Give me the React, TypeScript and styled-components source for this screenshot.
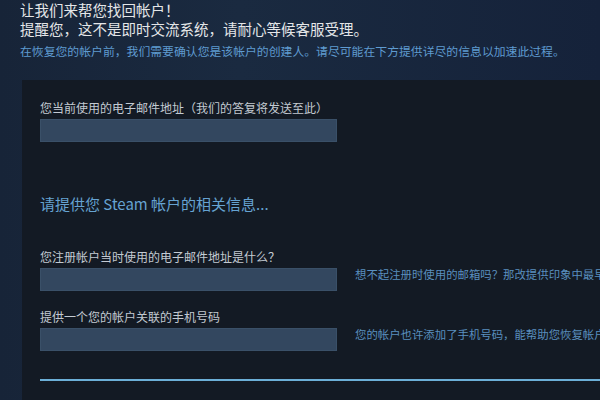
import styled, { createGlobalStyle } from "styled-components";

const GlobalStyle = createGlobalStyle`
  html, body {
    margin: 0;
    padding: 0;
    height: 100%;
    background: #172538;
  }
  body {
    font-family: "Noto Sans CJK SC", "Noto Sans", sans-serif;
    overflow: hidden;
  }
`;

function App() {
  const TITLE1 = "让我们来帮您找回帐户！";
  const TITLE2 = "提醒您，这不是即时交流系统，请耐心等候客服受理。";
  const INTRO =
    "在恢复您的帐户前，我们需要确认您是该帐户的创建人。请尽可能在下方提供详尽的信息以加速此过程。";

  return (
    <Page>
      <GlobalStyle />
      <Header>
        <Title>{TITLE1}</Title>
        <Title>{TITLE2}</Title>
        <Intro>{INTRO}</Intro>
      </Header>
      <Panel>
        <Field>
          <Label>您当前使用的电子邮件地址（我们的答复将发送至此）</Label>
          <Row>
            <Input type="text" />
          </Row>
        </Field>

        <SectionHeading>请提供您 Steam 帐户的相关信息...</SectionHeading>

        <Field>
          <Label>您注册帐户当时使用的电子邮件地址是什么？</Label>
          <Row>
            <Input type="text" />
            <Hint>
              想不起注册时使用的邮箱吗？那改提供印象中最早使用的邮箱地址吧。
            </Hint>
          </Row>
        </Field>

        <Field $gap={18}>
          <Label>提供一个您的帐户关联的手机号码</Label>
          <Row>
            <Input type="text" />
            <Hint>您的帐户也许添加了手机号码，能帮助您恢复帐户。</Hint>
          </Row>
        </Field>

        <Divider />
      </Panel>
    </Page>
  );
}

export default App;

// Style
const Page = styled.div`
  width: 600px;
  height: 400px;
  overflow: hidden;
  background: linear-gradient(90deg, #172438 0%, #1a2a40 40%, #15223a 100%);
`;

const Header = styled.div`
  padding: 0 20px;
  height: 80px;
  box-sizing: border-box;
`;

const Title = styled.div`
  font-size: 14.5px;
  line-height: 19px;
  color: #e4e6e8;
  white-space: nowrap;
`;

const Intro = styled.div`
  margin-top: 5px;
  font-size: 11.85px;
  line-height: 16px;
  color: #5f9bd0;
  white-space: nowrap;
`;

const Panel = styled.div`
  margin-left: 22px;
  padding: 20px 0 40px 18px;
  background: #131a24;
  min-height: 320px;
  box-sizing: border-box;
`;

const Field = styled.div<{ $gap?: number }>`
  display: flex;
  flex-direction: column;
  gap: 3px;
  margin-top: ${(p) => p.$gap ?? 0}px;
`;

const Label = styled.div`
  font-size: 12px;
  line-height: 16px;
  color: #c3cad2;
  white-space: nowrap;
`;

const Row = styled.div`
  display: flex;
  align-items: flex-start;
  gap: 18px;
  overflow: hidden;
`;

const Input = styled.input`
  flex: 0 0 auto;
  width: 297px;
  height: 23px;
  box-sizing: border-box;
  margin: 0;
  padding: 0 8px;
  border: 1px solid #3a5068;
  background: #33475f;
  color: #ffffff;
  outline: none;
`;

const Hint = styled.div`
  font-size: 11.4px;
  line-height: 12px;
  color: #5a8fbf;
  white-space: nowrap;
`;

const SectionHeading = styled.div`
  margin: 52px 0 35px;
  font-size: 15px;
  line-height: 20px;
  color: #66a3d2;
`;

const Divider = styled.div`
  margin-top: 28px;
  height: 2px;
  background: #6cb0d8;
`;
